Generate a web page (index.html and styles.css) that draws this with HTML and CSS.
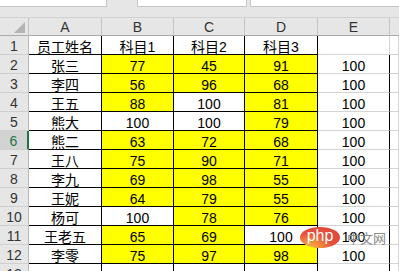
FILE: index.html
```html
<!DOCTYPE html>
<html lang="zh">
<head>
<meta charset="utf-8">
<title>Sheet</title>
<link rel="stylesheet" href="styles.css">
</head>
<body>
<div class="topbar">
  <div class="box box-name"></div>
  <div class="box box-mid"></div>
  <div class="box box-formula"></div>
</div>
<div class="sheet">
  <div class="corner"><span class="tri"></span></div>
  <div class="ch">A</div><div class="ch">B</div><div class="ch">C</div><div class="ch">D</div><div class="ch">E</div><div class="ch last"></div>

  <div class="rh">1</div><div class="c k">员工姓名</div><div class="c k">科目1</div><div class="c k">科目2</div><div class="c k">科目3</div><div class="c"></div><div class="c"></div>

  <div class="rh">2</div><div class="c k">张三</div><div class="c k y">77</div><div class="c k y">45</div><div class="c k y">91</div><div class="c er">100</div><div class="c"></div>
  <div class="rh">3</div><div class="c k">李四</div><div class="c k y">56</div><div class="c k y">96</div><div class="c k y">68</div><div class="c er">100</div><div class="c"></div>
  <div class="rh">4</div><div class="c k">王五</div><div class="c k y">88</div><div class="c k">100</div><div class="c k y">81</div><div class="c er">100</div><div class="c"></div>
  <div class="rh">5</div><div class="c k">熊大</div><div class="c k">100</div><div class="c k">100</div><div class="c k y">79</div><div class="c er">100</div><div class="c"></div>
  <div class="rh sel">6</div><div class="c k">熊二</div><div class="c k y">63</div><div class="c k y">72</div><div class="c k y">68</div><div class="c er">100</div><div class="c"></div>
  <div class="rh">7</div><div class="c k">王八</div><div class="c k y">75</div><div class="c k y">90</div><div class="c k y">71</div><div class="c er">100</div><div class="c"></div>
  <div class="rh">8</div><div class="c k">李九</div><div class="c k y">69</div><div class="c k y">98</div><div class="c k y">55</div><div class="c er">100</div><div class="c"></div>
  <div class="rh">9</div><div class="c k">王妮</div><div class="c k y">64</div><div class="c k y">79</div><div class="c k y">55</div><div class="c er">100</div><div class="c"></div>
  <div class="rh">10</div><div class="c k">杨可</div><div class="c k">100</div><div class="c k y">78</div><div class="c k y">76</div><div class="c er">100</div><div class="c"></div>
  <div class="rh">11</div><div class="c k">王老五</div><div class="c k y">65</div><div class="c k y">69</div><div class="c k">100</div><div class="c er">100</div><div class="c"></div>
  <div class="rh">12</div><div class="c k">李零</div><div class="c k y">75</div><div class="c k y">97</div><div class="c k y">98</div><div class="c er">100</div><div class="c"></div>
  <div class="rh">13</div><div class="c kv"></div><div class="c kv"></div><div class="c kv"></div><div class="c kv"></div><div class="c er"></div><div class="c"></div>
</div>
<div class="wm"><span class="wm-logo">php</span><span class="wm-text">中文网</span></div>
</body>
</html>
```
FILE: styles.css
```css
html, body {
  margin: 0;
  padding: 0;
  height: 271px;
  overflow: hidden;
  background: #e6e6e6;
}
body {
  position: relative;
  font-family: "Liberation Sans", "Noto Sans CJK SC", sans-serif;
}
.topbar {
  height: 17px;
  display: flex;
  align-items: flex-start;
  box-sizing: border-box;
}
.box {
  height: 7px;
  background: #fff;
  border-bottom: 1px solid #c6c6c6;
  box-sizing: border-box;
}
.box-name {
  width: 107px;
  border-right: 1px solid #c6c6c6;
}
.box-mid {
  width: 110px;
  margin-left: 30px;
  border-left: 1px solid #c6c6c6;
  border-right: 1px solid #c6c6c6;
}
.box-formula {
  flex: 1;
  margin-left: 3px;
  border-left: 1px solid #c6c6c6;
}
.sheet {
  display: grid;
  grid-template-columns: 29px 73px 72px 71px 73px 72px 1fr;
  grid-template-rows: repeat(14, 19px);
  background: #fff;
}
.sheet > div {
  box-sizing: border-box;
  overflow: visible;
}
.corner, .ch {
  background: #e6e6e6;
  border-top: 1px solid #d2d2d2;
  border-bottom: 1px solid #ababab;
  border-right: 1px solid #c4c4c4;
}
.corner {
  position: relative;
}
.tri {
  position: absolute;
  right: 3px;
  bottom: 2px;
  width: 0;
  height: 0;
  border-left: 11px solid transparent;
  border-bottom: 11px solid #b4b4b4;
}
.ch {
  font-size: 14px;
  line-height: 18px;
  text-align: center;
  color: #333;
}
.ch.last {
  border-right: 0;
}
.rh {
  background: #e6e6e6;
  border-right: 1px solid #bcbcbc;
  border-bottom: 1px solid #cfcfcf;
  font-size: 14px;
  line-height: 18px;
  padding-top: 1px;
  text-align: center;
  color: #333;
}
.rh.sel {
  background: #d3d3d3;
  color: #217346;
  border-right: 2px solid #217346;
}
.c {
  background: #fff;
  border-right: 1px solid #d4d4d4;
  border-bottom: 1px solid #d4d4d4;
  font-size: 14px;
  line-height: 18px;
  padding-top: 2px;
  text-align: center;
  color: #000;
  white-space: nowrap;
}
.c.k {
  border-right-color: #000;
  border-bottom-color: #000;
}
.c.y {
  background: #ffff00;
}
.c.er {
  border-right-color: #000;
}
.c.kv {
  border-right-color: #000;
}
.wm {
  position: absolute;
  left: 300px;
  top: 227px;
  display: flex;
  align-items: center;
  gap: 7px;
}
.wm-logo {
  width: 40px;
  height: 21px;
  border-radius: 50%;
  background: radial-gradient(ellipse at 25% 115%, #f7c04a 0%, #f0893a 30%, #e4503d 55%, #df433b 100%);
  color: #fff;
  font-family: "Liberation Sans", sans-serif;
  font-size: 16px;
  line-height: 18px;
  text-align: center;
  padding-bottom: 3px;
  box-sizing: border-box;
}
.wm-text {
  color: #8a8a8a;
  font-family: "Noto Sans CJK SC", sans-serif;
  font-size: 13px;
  line-height: 16px;
}
```
